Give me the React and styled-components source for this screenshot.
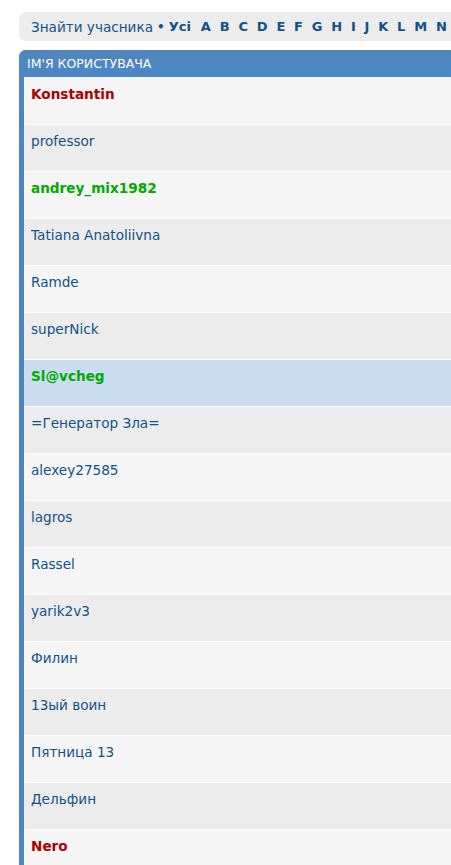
import styled, { createGlobalStyle } from 'styled-components';

const users = [
  { name: 'Konstantin', tone: 'admin' },
  { name: 'professor' },
  { name: 'andrey_mix1982', tone: 'mod' },
  { name: 'Tatiana Anatoliivna' },
  { name: 'Ramde' },
  { name: 'superNick' },
  { name: 'Sl@vcheg', tone: 'mod', active: true },
  { name: '=Генератор Зла=' },
  { name: 'alexey27585' },
  { name: 'lagros' },
  { name: 'Rassel' },
  { name: 'yarik2v3' },
  { name: 'Филин' },
  { name: '13ый воин' },
  { name: 'Пятница 13' },
  { name: 'Дельфин' },
  { name: 'Nero', tone: 'admin' },
];

const letters = ['A', 'B', 'C', 'D', 'E', 'F', 'G', 'H', 'I', 'J', 'K', 'L', 'M', 'N'];

const toneColors = {
  admin: '#aa0000',
  mod: '#00aa00',
};

const GlobalStyle = createGlobalStyle`
  html, body {
    margin: 0;
    padding: 0;
    background: #ffffff;
    overflow: hidden;
  }
  body {
    font-family: "DejaVu Sans", Verdana, sans-serif;
  }
`;

const Page = styled.div`
  width: 760px;
  padding: 12px 0 0 19px;
  display: flex;
  flex-direction: column;
  gap: 9px;
`;

const FilterBar = styled.div`
  display: flex;
  align-items: center;
  height: 29px;
  padding: 0 12px;
  background: #ececec;
  border-radius: 7px;
  white-space: nowrap;
  font-size: 13.6px;
  color: #105289;
`;

const FilterLabel = styled.span`
  margin-right: 4px;
`;

const Bullet = styled.span`
  margin-right: 4px;
  font-size: 12px;
  font-weight: bold;
`;

const Letter = styled.a`
  font-weight: bold;
  font-size: 13px;
  color: #105289;
  text-decoration: none;
  margin-right: ${(p) => (p.$wide ? 10 : 8.8)}px;
`;

const Panel = styled.div`
  background: #4f85bd;
  border-radius: 7px 0 0 0;
  padding-left: 5px;
`;

const Header = styled.div`
  height: 27px;
  display: flex;
  align-items: center;
  margin-left: -5px;
  padding-left: 8px;
  background: linear-gradient(#5286bb, #4a87c7);
  border-radius: 7px 0 0 0;
  color: #ffffff;
  font-size: 12.5px;
  text-transform: uppercase;
`;

const Rows = styled.div`
  display: flex;
  flex-direction: column;
`;

const Row = styled.div`
  box-sizing: border-box;
  height: 47px;
  border-top: 1px solid #ffffff;
  padding: 6px 7px 0;
  background: ${(p) => (p.$active ? '#cadcf0' : p.$odd ? '#ececec' : '#f5f5f5')};
  &:first-of-type {
    border-top: none;
    padding-top: 7px;
  }
`;

const UserName = styled.a`
  font-size: 13.6px;
  line-height: 17px;
  text-decoration: none;
  color: ${(p) => toneColors[p.$tone] || '#105289'};
  font-weight: ${(p) => (p.$tone ? 'bold' : 'normal')};
`;

export default function App() {
  return (
    <>
      <GlobalStyle />
      <Page>
        <FilterBar>
          <FilterLabel>Знайти учасника</FilterLabel>
          <Bullet>•</Bullet>
          <Letter $wide>Усі</Letter>
          {letters.map((l) => (
            <Letter key={l}>{l}</Letter>
          ))}
        </FilterBar>
        <Panel>
          <Header>Ім'я користувача</Header>
          <Rows>
            {users.map((u, i) => (
              <Row key={u.name} $odd={i % 2 === 1} $active={u.active}>
                <UserName $tone={u.tone}>{u.name}</UserName>
              </Row>
            ))}
          </Rows>
        </Panel>
      </Page>
    </>
  );
}
